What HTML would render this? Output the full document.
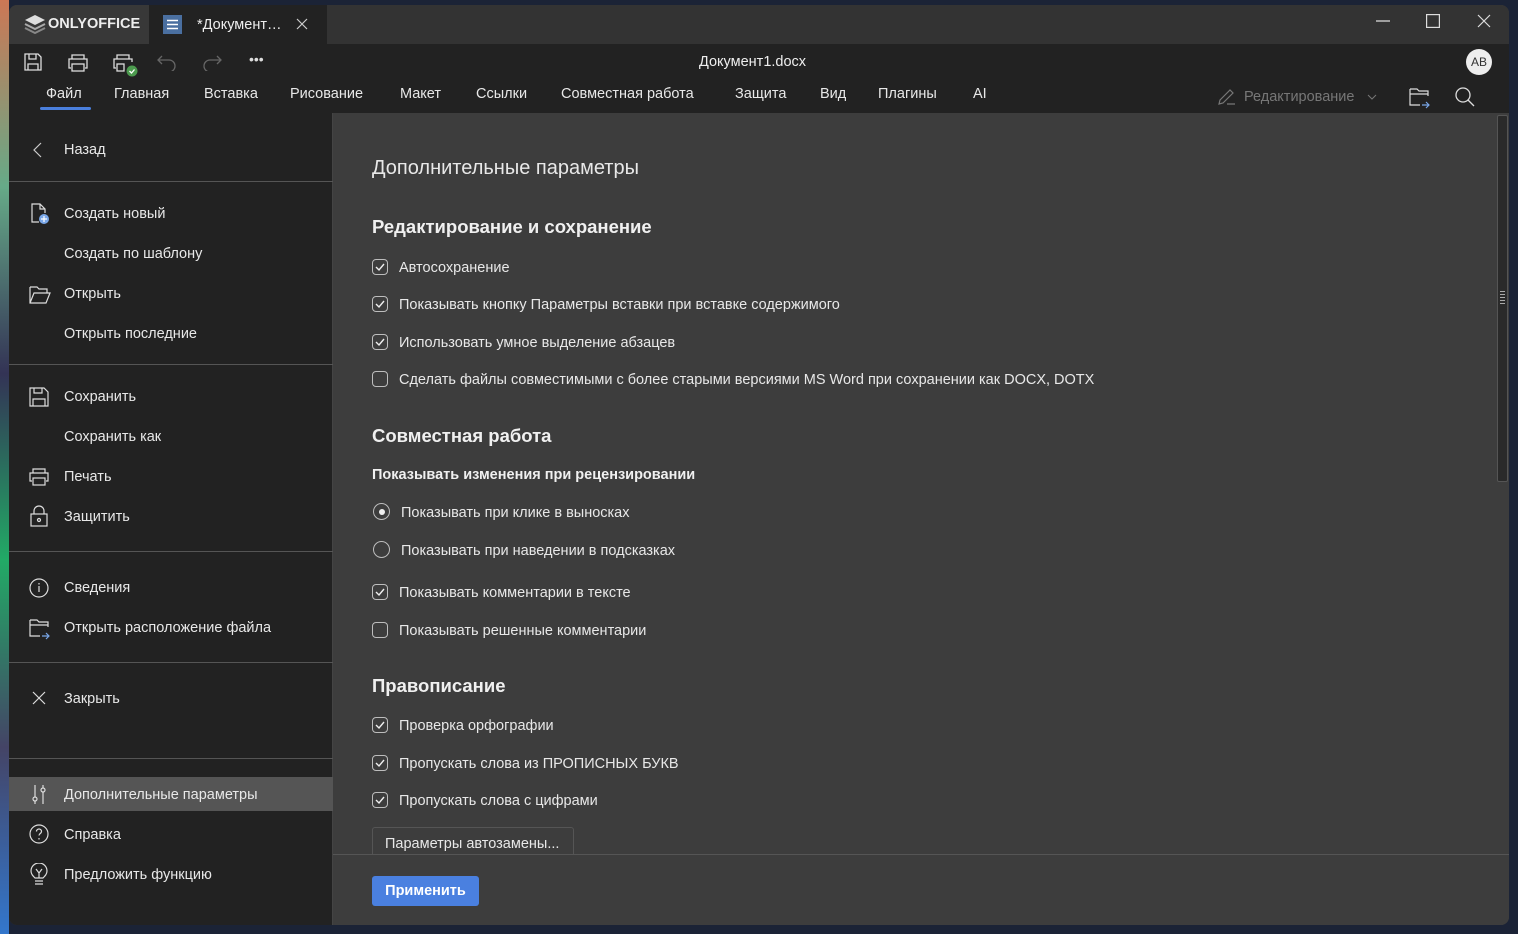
<!DOCTYPE html>
<html><head><meta charset="utf-8"><style>
*{margin:0;padding:0;box-sizing:border-box}
body{width:1518px;height:934px;overflow:hidden;background:#1b2336;font-family:"Liberation Sans","Noto Sans CJK SC",sans-serif;color:#e8e8e8;position:relative}
.a{position:absolute;white-space:nowrap}
.win{position:absolute;left:9px;top:5px;width:1500px;height:920px;background:#3d3d3d;border-radius:8px 8px 8px 8px;overflow:hidden}
.t{font-size:14.5px;line-height:18px}
.m{font-size:14.5px;line-height:18px;color:#e8e8e8}
.sep{position:absolute;left:0;width:324px;height:1px;background:#555}
.cb{position:absolute;width:16px;height:16px;border:1.3px solid #bdbdbd;border-radius:4px}
.rd{position:absolute;width:17px;height:17px;border:1.3px solid #bdbdbd;border-radius:50%}
.h{font-size:18.5px;font-weight:bold;color:#f0f0f0}
svg{position:absolute}
</style></head><body>
<div style="position:absolute;left:0;top:0;width:9px;height:934px;background:linear-gradient(#c75,#6a8,#335,#2a6,#446,#37c)"></div>
<div class="win">
 <div class="a" style="left:0;top:0;width:1500px;height:39px;background:#333"></div>
 <div class="a" style="left:0;top:0;width:140px;height:39px;background:#383838"></div>
 <div class="a" style="left:140px;top:0;width:178px;height:39px;background:#222"></div>
 <svg style="left:15px;top:9px" width="22" height="20" viewBox="0 0 22 20"><path d="M11 1L21 6 11 11 1 6Z" fill="#ddd"/><path d="M1 10l10 5 10-5" stroke="#aaa" stroke-width="2" fill="none"/><path d="M1 14l10 5 10-5" stroke="#888" stroke-width="2" fill="none"/></svg>
 <div class="a" style="left:39px;top:11px;font-size:14.5px;font-weight:bold;color:#eee">ONLYOFFICE</div>
 <div class="a" style="left:154px;top:10px;width:19px;height:19px;background:#4a6fa0"></div>
 <svg style="left:157px;top:14px" width="13" height="11"><path d="M1 1.5h11M1 5.5h11M1 9.5h11" stroke="#fff" stroke-width="1.4"/></svg>
 <div class="a t" style="left:188px;top:11px;color:#eee">*Документ…</div>
 <svg style="left:287px;top:13px" width="12" height="12"><path d="M1 1l10 10M11 1L1 11" stroke="#ccc" stroke-width="1.2"/></svg>
 <svg style="left:1367px;top:15px" width="14" height="2"><path d="M0 1h14" stroke="#ddd" stroke-width="1.2"/></svg>
 <svg style="left:1417px;top:9px" width="14" height="14"><rect x=".6" y=".6" width="12.8" height="12.8" stroke="#ddd" stroke-width="1.2" fill="none"/></svg>
 <svg style="left:1468px;top:9px" width="14" height="14"><path d="M1 1l12 12M13 1L1 13" stroke="#ddd" stroke-width="1.2"/></svg>
 <div class="a" style="left:0;top:39px;width:1500px;height:69px;background:#222"></div>
 <svg style="left:14px;top:47px" width="20" height="20" viewBox="0 0 20 20" fill="none" stroke="#ddd" stroke-width="1.3"><path d="M2 2h13l3 3v13H2z"/><path d="M6 2v5h7V2M5 18v-6h10v6"/></svg>
 <svg style="left:58px;top:48px" width="22" height="20" fill="none" stroke="#ddd" stroke-width="1.3"><path d="M5 6V2h12v4M4 15H2V6h18v9h-2"/><rect x="5" y="11" width="12" height="7"/></svg>
 <svg style="left:103px;top:48px" width="26" height="26" fill="none" stroke="#ddd" stroke-width="1.3"><path d="M5 6V2h12v4M4 15H2V6h18v3"/><rect x="5" y="11" width="7" height="7"/><circle cx="20" cy="18" r="5.5" fill="#4c9a4e" stroke="none"/><path d="M17.5 18l2 2 3-3.5" stroke="#fff"/></svg>
 <svg style="left:148px;top:50px" width="20" height="16" fill="none" stroke="#666" stroke-width="1.3"><path d="M5 1L1 5l4 4M1 5h11a6 6 0 010 12H8"/></svg>
 <svg style="left:193px;top:50px" width="20" height="16" fill="none" stroke="#666" stroke-width="1.3"><path d="M15 1l4 4-4 4M19 5H8a6 6 0 000 12h4"/></svg>
 <div class="a" style="left:240px;top:46px;font-size:14px;color:#ddd;letter-spacing:0px">•••</div>
 <div class="a t" style="left:690px;top:48px;color:#eee">Документ1.docx</div>
 <div class="a" style="left:1457px;top:44px;width:26px;height:26px;border-radius:50%;background:#eee;color:#333;font-size:12px;text-align:center;line-height:26px">AB</div>
 <div class="a t" style="left:37px;top:80px">Файл</div>
 <div class="a" style="left:31px;top:102px;width:51px;height:3px;background:#4a7fdd;border-radius:2px"></div>
 <div class="a t" style="left:105px;top:80px">Главная</div>
 <div class="a t" style="left:195px;top:80px">Вставка</div>
 <div class="a t" style="left:281px;top:80px">Рисование</div>
 <div class="a t" style="left:391px;top:80px">Макет</div>
 <div class="a t" style="left:467px;top:80px">Ссылки</div>
 <div class="a t" style="left:552px;top:80px">Совместная работа</div>
 <div class="a t" style="left:726px;top:80px">Защита</div>
 <div class="a t" style="left:811px;top:80px">Вид</div>
 <div class="a t" style="left:869px;top:80px">Плагины</div>
 <div class="a t" style="left:964px;top:80px">AI</div>
 <svg style="left:1208px;top:82px" width="20" height="20" fill="none" stroke="#777" stroke-width="1.2"><path d="M2 17l1-4L13 3l3 3L6 16zM10 17h8"/></svg>
 <div class="a t" style="left:1235px;top:83px;color:#777">Редактирование</div>
 <svg style="left:1358px;top:89px" width="10" height="6" fill="none" stroke="#777"><path d="M1 1l4 4 4-4"/></svg>
 <svg style="left:1400px;top:82px" width="22" height="22" fill="none" stroke="#ddd" stroke-width="1.2"><path d="M1 2h7l2 2h9v5M1 2v16h10M1 7h18"/><path d="M13 18h7M17 15l3 3-3 3" stroke="#7aa7e8"/></svg>
 <svg style="left:1446px;top:82px" width="20" height="20" fill="none" stroke="#ddd" stroke-width="1.3"><circle cx="8" cy="8" r="7"/><path d="M13 13l6 6"/></svg>
 <div class="a" style="left:0;top:108px;width:324px;height:812px;background:#222;border-right:1px solid #444"></div>
 <svg style="left:24px;top:137px" width="10" height="16" fill="none" stroke="#ccc" stroke-width="1.2"><path d="M8 1L1 8l7 7"/></svg>
 <div class="a m" style="left:55px;top:136px">Назад</div>
 <div class="sep" style="top:176px"></div>
 <svg style="left:21px;top:198px" width="20" height="22" fill="none" stroke="#ddd" stroke-width="1.2"><path d="M9 19H2V1h8l5 5v4M10 1v5h5"/><circle cx="14" cy="16" r="5" fill="#7aa7e8" stroke="none"/><path d="M14 13v6M11 16h6" stroke="#fff"/></svg>
 <div class="a m" style="left:55px;top:200px">Создать новый</div>
 <div class="a m" style="left:55px;top:240px">Создать по шаблону</div>
 <svg style="left:20px;top:281px" width="22" height="18" fill="none" stroke="#ddd" stroke-width="1.2"><path d="M1 1h7l2 2h8v4M1 1v16h16l4-10H5L1 17"/></svg>
 <div class="a m" style="left:55px;top:280px">Открыть</div>
 <div class="a m" style="left:55px;top:320px">Открыть последние</div>
 <div class="sep" style="top:359px"></div>
 <svg style="left:20px;top:382px" width="20" height="20" viewBox="0 0 20 20" fill="none" stroke="#ddd" stroke-width="1.2"><path d="M1 1h14l4 4v14H1z"/><path d="M5 1v5h8V1M4 19v-7h12v7"/></svg>
 <div class="a m" style="left:55px;top:383px">Сохранить</div>
 <div class="a m" style="left:55px;top:423px">Сохранить как</div>
 <svg style="left:20px;top:463px" width="20" height="18" fill="none" stroke="#ddd" stroke-width="1.2"><path d="M4 5V1h12v4M3 13H1V5h18v8h-2"/><rect x="4" y="10" width="12" height="7"/></svg>
 <div class="a m" style="left:55px;top:463px">Печать</div>
 <svg style="left:21px;top:500px" width="18" height="22" fill="none" stroke="#ddd" stroke-width="1.2"><path d="M4 9V6a5 5 0 0110 0v3"/><rect x="1" y="9" width="16" height="12"/><circle cx="9" cy="15" r="1.5"/></svg>
 <div class="a m" style="left:55px;top:503px">Защитить</div>
 <div class="sep" style="top:546px"></div>
 <svg style="left:20px;top:573px" width="20" height="20" fill="none" stroke="#ddd" stroke-width="1.2"><circle cx="10" cy="10" r="9"/><path d="M10 8v6M10 5v1.5"/></svg>
 <div class="a m" style="left:55px;top:574px">Сведения</div>
 <svg style="left:20px;top:613px" width="22" height="22" fill="none" stroke="#ddd" stroke-width="1.2"><path d="M1 2h7l2 2h9v5M1 2v16h10M1 7h18"/><path d="M13 18h7M17 15l3 3-3 3" stroke="#7aa7e8"/></svg>
 <div class="a m" style="left:55px;top:614px">Открыть расположение файла</div>
 <div class="sep" style="top:657px"></div>
 <svg style="left:23px;top:686px" width="14" height="14" fill="none" stroke="#ddd" stroke-width="1.2"><path d="M1 1l12 12M13 1L1 13"/></svg>
 <div class="a m" style="left:55px;top:685px">Закрыть</div>
 <div class="sep" style="top:753px"></div>
 <div class="a" style="left:0;top:772px;width:324px;height:34px;background:#555"></div>
 <svg style="left:21px;top:779px" width="18" height="20" fill="none" stroke="#ddd" stroke-width="1.2"><path d="M5 1v12M5 17v3M13 1v3M13 8v12"/><circle cx="5" cy="15" r="2"/><circle cx="13" cy="6" r="2"/></svg>
 <div class="a m" style="left:55px;top:781px">Дополнительные параметры</div>
 <svg style="left:20px;top:819px" width="20" height="20" fill="none" stroke="#ddd" stroke-width="1.2"><circle cx="10" cy="10" r="9"/><path d="M7.5 7.5a2.5 2.5 0 115 0c0 2-2.5 2-2.5 4M10 14v1.5"/></svg>
 <div class="a m" style="left:55px;top:821px">Справка</div>
 <svg style="left:21px;top:858px" width="18" height="24" fill="none" stroke="#ddd" stroke-width="1.2"><path d="M5 15c-2-2-4-4-4-7a8 8 0 0116 0c0 3-2 5-4 7zM5 18h8M5 21h8M6 6l3 4 3-4M9 10v5"/></svg>
 <div class="a m" style="left:55px;top:861px">Предложить функцию</div>
 <div class="a" style="left:363px;top:152px;font-size:20px;color:#e8e8e8">Дополнительные параметры</div>
 <div class="a h" style="left:363px;top:211px">Редактирование и сохранение</div>
 <div class="cb" style="left:363px;top:254px"></div><div class="a t" style="left:390px;top:254px">Автосохранение</div>
 <div class="cb" style="left:363px;top:291px"></div><div class="a t" style="left:390px;top:291px">Показывать кнопку Параметры вставки при вставке содержимого</div>
 <div class="cb" style="left:363px;top:329px"></div><div class="a t" style="left:390px;top:329px">Использовать умное выделение абзацев</div>
 <div class="cb" style="left:363px;top:366px"></div><div class="a t" style="left:390px;top:366px">Сделать файлы совместимыми с более старыми версиями MS Word при сохранении как DOCX, DOTX</div>
 <div class="a h" style="left:363px;top:420px">Совместная работа</div>
 <div class="a" style="left:363px;top:462px;font-size:14.5px;font-weight:bold;color:#f0f0f0">Показывать изменения при рецензировании</div>
 <div class="rd" style="left:364px;top:498px"></div><div class="a" style="left:369.5px;top:503.5px;width:6px;height:6px;border-radius:50%;background:#eee"></div><div class="a t" style="left:392px;top:499px">Показывать при клике в выносках</div>
 <div class="rd" style="left:364px;top:536px"></div><div class="a t" style="left:392px;top:537px">Показывать при наведении в подсказках</div>
 <div class="cb" style="left:363px;top:579px"></div><div class="a t" style="left:390px;top:579px">Показывать комментарии в тексте</div>
 <div class="cb" style="left:363px;top:617px"></div><div class="a t" style="left:390px;top:617px">Показывать решенные комментарии</div>
 <div class="a h" style="left:363px;top:670px">Правописание</div>
 <div class="cb" style="left:363px;top:712px"></div><div class="a t" style="left:390px;top:712px">Проверка орфографии</div>
 <div class="cb" style="left:363px;top:750px"></div><div class="a t" style="left:390px;top:750px">Пропускать слова из ПРОПИСНЫХ БУКВ</div>
 <div class="cb" style="left:363px;top:787px"></div><div class="a t" style="left:390px;top:787px">Пропускать слова с цифрами</div>
 <div class="a" style="left:363px;top:822px;width:202px;height:34px;border:1px solid #555;border-radius:3px;background:#3d3d3d"></div>
 <div class="a t" style="left:376px;top:830px">Параметры автозамены...</div>
 <svg style="left:363px;top:254px" width="16" height="570" fill="none" stroke="#eee" stroke-width="1.4">
  <path d="M4 8l3 3 5-6"/><path transform="translate(0,37)" d="M4 8l3 3 5-6"/><path transform="translate(0,75)" d="M4 8l3 3 5-6"/><path transform="translate(0,325)" d="M4 8l3 3 5-6"/><path transform="translate(0,458)" d="M4 8l3 3 5-6"/><path transform="translate(0,496)" d="M4 8l3 3 5-6"/><path transform="translate(0,533)" d="M4 8l3 3 5-6"/>
 </svg>
 <div class="a" style="left:324px;top:849px;width:1176px;height:71px;background:#3d3d3d;border-top:1px solid #555"></div>
 <div class="a" style="left:363px;top:871px;width:107px;height:30px;background:#4a80e0;border-radius:3px;color:#fff;font-size:14.5px;font-weight:bold;text-align:center;line-height:30px">Применить</div>
 <div class="a" style="left:1488px;top:110px;width:11px;height:367px;background:#2a2a2a;border:1px solid #555;border-radius:2px"></div>
 <svg style="left:1491px;top:286px" width="5" height="14" stroke="#aaa"><path d="M0 .5h5M0 3.5h5M0 6.5h5M0 9.5h5M0 12.5h5"/></svg>
</div>
</body></html>
